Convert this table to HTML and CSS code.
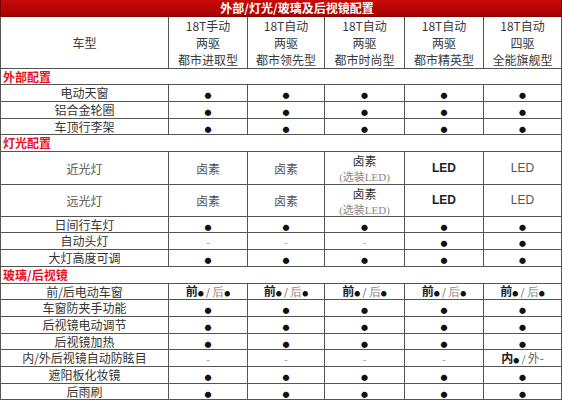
FILE: index.html
```html
<!DOCTYPE html>
<html lang="zh">
<head>
<meta charset="utf-8">
<title>外部/灯光/玻璃及后视镜配置</title>
<link rel="stylesheet" href="styles.css">
</head>
<body>
<table class="spec">
  <colgroup>
    <col class="c-name"><col class="c1"><col class="c2"><col class="c3"><col class="c4"><col class="c5">
  </colgroup>
  <tr class="title"><th colspan="6">外部/灯光/玻璃及后视镜配置</th></tr>
  <tr class="head">
    <td>车型</td>
    <td>18T手动<br>两驱<br>都市进取型</td>
    <td>18T自动<br>两驱<br>都市领先型</td>
    <td>18T自动<br>两驱<br>都市时尚型</td>
    <td>18T自动<br>两驱<br>都市精英型</td>
    <td>18T自动<br>四驱<br>全能旗舰型</td>
  </tr>
  <tr class="sec"><td colspan="6">外部配置</td></tr>
  <tr class="p17"><td>电动天窗</td><td><i>●</i></td><td><i>●</i></td><td><i>●</i></td><td><i>●</i></td><td><i>●</i></td></tr>
  <tr class="p17"><td>铝合金轮圈</td><td><i>●</i></td><td><i>●</i></td><td><i>●</i></td><td><i>●</i></td><td><i>●</i></td></tr>
  <tr><td>车顶行李架</td><td><i>●</i></td><td><i>●</i></td><td><i>●</i></td><td><i>●</i></td><td><i>●</i></td></tr>
  <tr class="sec p17"><td colspan="6">灯光配置</td></tr>
  <tr class="tall t33"><td class="lt">近光灯</td><td class="lt">卤素</td><td class="lt">卤素</td><td>卤素<br><span class="opt">(选装LED)</span></td><td class="led">LED</td><td class="led lt">LED</td></tr>
  <tr class="tall"><td class="lt">远光灯</td><td class="lt">卤素</td><td class="lt">卤素</td><td>卤素<br><span class="opt">(选装LED)</span></td><td class="led">LED</td><td class="led lt">LED</td></tr>
  <tr><td>日间行车灯</td><td><i>●</i></td><td><i>●</i></td><td><i>●</i></td><td><i>●</i></td><td><i>●</i></td></tr>
  <tr class="p17"><td>自动头灯</td><td><b>-</b></td><td><b>-</b></td><td><b>-</b></td><td><i>●</i></td><td><i>●</i></td></tr>
  <tr class="p17"><td>大灯高度可调</td><td><i>●</i></td><td><i>●</i></td><td><i>●</i></td><td><i>●</i></td><td><i>●</i></td></tr>
  <tr class="sec p17"><td colspan="6">玻璃/后视镜</td></tr>
  <tr><td>前/后电动车窗</td>
    <td class="fr">前<i>●</i><span class="sl"> / </span><span class="rr">后</span><i>●</i></td>
    <td class="fr">前<i>●</i><span class="sl"> / </span><span class="rr">后</span><i>●</i></td>
    <td class="fr">前<i>●</i><span class="sl"> / </span><span class="rr">后</span><i>●</i></td>
    <td class="fr">前<i>●</i><span class="sl"> / </span><span class="rr">后</span><i>●</i></td>
    <td class="fr">前<i>●</i><span class="sl"> / </span><span class="rr">后</span><i>●</i></td>
  </tr>
  <tr class="p17"><td>车窗防夹手功能</td><td><i>●</i></td><td><i>●</i></td><td><i>●</i></td><td><i>●</i></td><td><i>●</i></td></tr>
  <tr class="p17"><td>后视镜电动调节</td><td><i>●</i></td><td><i>●</i></td><td><i>●</i></td><td><i>●</i></td><td><i>●</i></td></tr>
  <tr><td>后视镜加热</td><td><i>●</i></td><td><i>●</i></td><td><i>●</i></td><td><i>●</i></td><td><i>●</i></td></tr>
  <tr class="p17"><td>内/外后视镜自动防眩目</td><td><b>-</b></td><td><b>-</b></td><td><b>-</b></td><td><b>-</b></td><td class="fr">内<i>●</i><span class="sl"> / </span><span class="out">外-</span></td></tr>
  <tr class="p17"><td>遮阳板化妆镜</td><td><i>●</i></td><td><i>●</i></td><td><i>●</i></td><td><i>●</i></td><td><i>●</i></td></tr>
  <tr><td>后雨刷</td><td><i>●</i></td><td><i>●</i></td><td><i>●</i></td><td><i>●</i></td><td><i>●</i></td></tr>
</table>
</body>
</html>
```
FILE: styles.css
```css
html, body {
  margin: 0;
  padding: 0;
  background: #ffffff;
}
body {
  font-family: "Noto Sans CJK SC", "Noto Sans", sans-serif;
  font-size: 12px;
  color: #333333;
}
.spec {
  width: 561px;
  table-layout: fixed;
  border-collapse: collapse;
}
.c-name { width: 168px; }
.c1 { width: 79px; }
.c2 { width: 77px; }
.c3 { width: 80px; }
.c4 { width: 79px; }
.c5 { width: 78px; }
.spec td, .spec th {
  border: 1px solid #555555;
  padding: 0;
  text-align: center;
  vertical-align: middle;
  height: 15px;
  line-height: 14px;
  white-space: nowrap;
  overflow: hidden;
}
.spec tr.p17 td {
  height: 16px;
}
.spec td i, .spec td b, .spec td span {
  line-height: 10px;
  vertical-align: baseline;
}
.title th {
  height: 16px;
  line-height: 14px;
  background: linear-gradient(#c80a0a, #a80000);
  color: #ffffff;
  font-weight: bold;
  font-size: 12px;
  border: 1px solid #7a0000;
  border-top: none;
  padding-left: 32px;
}
.head td {
  height: 50px;
  line-height: 17px;
  color: #3a3a3a;
}
.sec td {
  text-align: left;
  color: #e8101a;
  font-weight: bold;
  padding-left: 2px;
}
.spec tr.tall td {
  height: 31px;
  line-height: 15px;
}
.spec tr.tall.t33 td {
  height: 32px;
}
.tall td.lt {
  color: #555555;
}
.opt {
  font-family: "Liberation Serif", "Noto Sans CJK SC", serif;
  color: #888888;
  font-size: 11px;
}
.led {
  font-family: "Liberation Sans", "Noto Sans", sans-serif;
  font-weight: bold;
  font-size: 12px;
  color: #222222;
}
.led.lt {
  font-weight: normal;
  color: #444444;
}
i {
  font-style: normal;
  font-size: 7px;
  color: #111111;
}
b {
  font-weight: normal;
  color: #777777;
  font-size: 9px;
}
.fr {
  color: #222222;
  font-weight: bold;
}
.fr i {
  font-size: 6px;
}
.sl {
  font-weight: normal;
  font-size: 10px;
  color: #555555;
}
.rr {
  font-family: "Liberation Serif", serif;
  font-weight: normal;
  color: #888888;
}
.out {
  font-weight: normal;
  color: #666666;
}
```
